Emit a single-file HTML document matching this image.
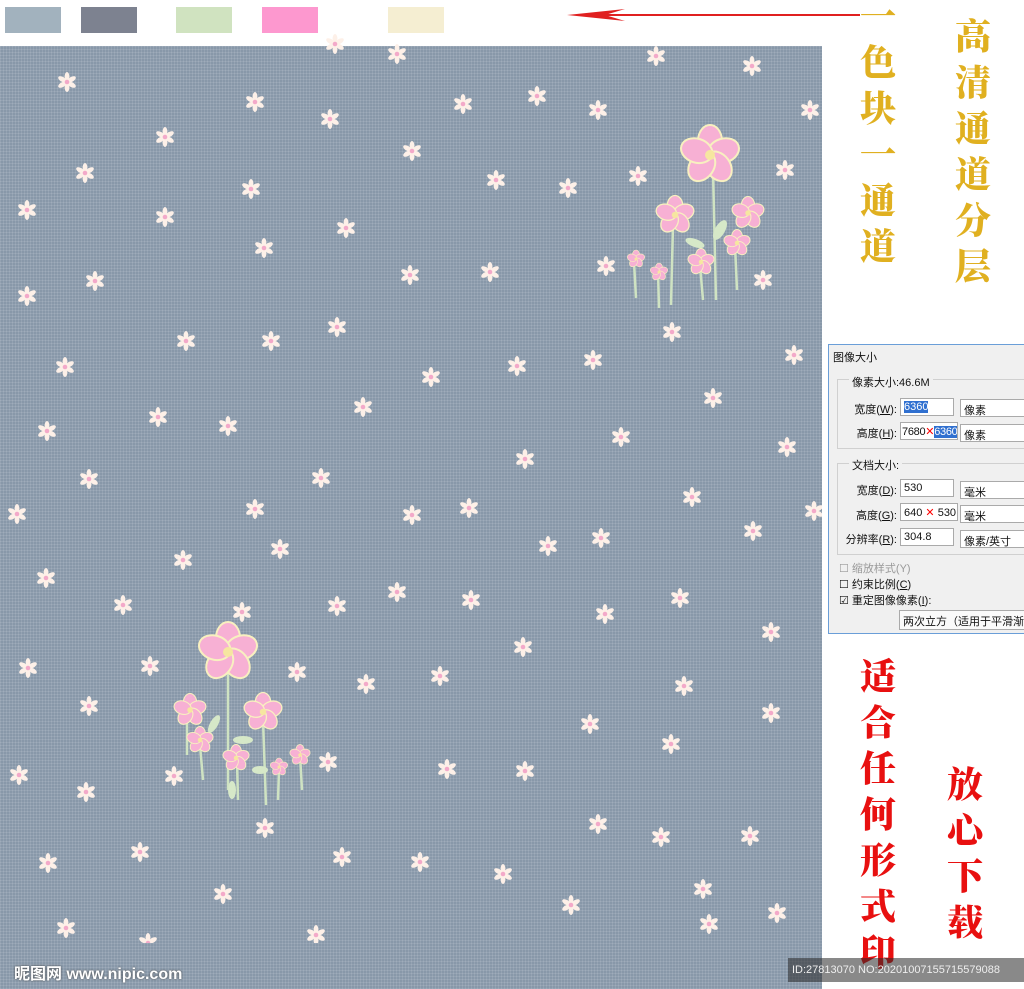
<!DOCTYPE html>
<html><head><meta charset="utf-8"><style>
*{margin:0;padding:0;box-sizing:border-box}
body{width:1024px;height:989px;background:#fff;position:relative;overflow:hidden;font-family:"Liberation Sans","Noto Sans CJK SC",sans-serif}
.sw{position:absolute;top:7px;height:26px;width:56px}
#pat{position:absolute;left:0;top:46px;width:822px;height:943px;background-color:#8898a9;
background-image:repeating-linear-gradient(90deg,rgba(255,255,255,.1) 0 1px,transparent 1px 3px),repeating-linear-gradient(0deg,rgba(255,255,255,.1) 0 1px,transparent 1px 3px)}
.col{position:absolute;font-family:"Noto Serif CJK SC",serif;font-weight:900;font-size:36px;line-height:46px;width:44px;text-align:center}
.y{color:#e0b020}.r{color:#e81010}
#dlg{position:absolute;left:828px;top:344px;width:200px;height:290px;background:#f0f0f0;border:1px solid #6a9ed8;font-size:11px;color:#111;white-space:nowrap;overflow:hidden}
#dlg .t{position:absolute;left:4px;top:4px}
.grp{position:absolute;left:8px;border:1px solid #d0d0d0}
.lb{position:absolute;text-align:right;width:60px}
.in{position:absolute;background:#fff;border:1px solid #aaa;height:18px;padding:2px 3px;overflow:hidden}
.sel{position:absolute;background:#fff;border:1px solid #aaa;height:18px;padding:2px 3px;width:70px}
</style></head><body>
<div class="sw" style="left:5px;background:#a2b2be"></div>
<div class="sw" style="left:81px;background:#7d8290"></div>
<div class="sw" style="left:176px;background:#d0e3c0"></div>
<div class="sw" style="left:262px;background:#fd98cf"></div>
<div class="sw" style="left:388px;background:#f5eed2"></div>
<svg style="position:absolute;left:565px;top:5px" width="300" height="20"><line x1="20" y1="10" x2="295" y2="10" stroke="#e02020" stroke-width="2"/><path d="M2 10 L60 4 L40 10 L60 16Z" fill="#e02020"/></svg>
<div id="pat"><svg id="s" width="822" height="943" style="position:absolute;left:0;top:-46px">
<defs><g id="f"><g fill="#fdf0e8"><ellipse cx="0" cy="-5.5" rx="2.4" ry="4.5"/><ellipse cx="0" cy="-5.5" rx="2.4" ry="4.5" transform="rotate(60)"/><ellipse cx="0" cy="-5.5" rx="2.4" ry="4.5" transform="rotate(120)"/><ellipse cx="0" cy="-5.5" rx="2.4" ry="4.5" transform="rotate(180)"/><ellipse cx="0" cy="-5.5" rx="2.4" ry="4.5" transform="rotate(240)"/><ellipse cx="0" cy="-5.5" rx="2.4" ry="4.5" transform="rotate(300)"/></g><circle r="2.3" fill="#f3a9c9"/></g>
<g id="p"><g fill="#f7b0d4" stroke="#f8f0c0" stroke-width="1"><ellipse cx="0" cy="-7" rx="6" ry="8"/><ellipse cx="0" cy="-7" rx="6" ry="8" transform="rotate(72)"/><ellipse cx="0" cy="-7" rx="6" ry="8" transform="rotate(144)"/><ellipse cx="0" cy="-7" rx="6" ry="8" transform="rotate(216)"/><ellipse cx="0" cy="-7" rx="6" ry="8" transform="rotate(288)"/></g><circle r="2.5" fill="#f6e6a0"/></g></defs>
<g id="g"></g>
<g stroke="#cfe3c2" stroke-width="2.5" fill="none"><path d="M713 170 L716 300"/><path d="M673 225 L671 305"/><path d="M700 265 L703 300"/><path d="M735 245 L737 290"/><path d="M634 262 L636 298"/><path d="M658 272 L659 308"/><path d="M228 665 L228 790"/><path d="M263 720 L266 805"/><path d="M187 715 L187 755"/><path d="M200 745 L203 780"/><path d="M237 760 L238 800"/><path d="M279 770 L278 800"/><path d="M300 755 L302 790"/></g>
<g fill="#d6e8c8"><ellipse cx="720" cy="230" rx="5" ry="11" transform="rotate(30 720 230)"/><ellipse cx="695" cy="243" rx="10" ry="4" transform="rotate(20 695 243)"/><ellipse cx="214" cy="724" rx="4" ry="10" transform="rotate(30 214 724)"/><ellipse cx="243" cy="740" rx="10" ry="4"/><ellipse cx="260" cy="770" rx="8" ry="4"/><ellipse cx="232" cy="790" rx="4" ry="9"/></g>
<use href="#p" transform="translate(710 155) scale(2)"/><use href="#p" transform="translate(675 215) scale(1.3)"/><use href="#p" transform="translate(748 213) scale(1.1)"/><use href="#p" transform="translate(737 243) scale(.9)"/><use href="#p" transform="translate(701 262) scale(.9)"/><use href="#p" transform="translate(636 259) scale(.6)"/><use href="#p" transform="translate(659 272) scale(.6)"/>
<use href="#p" transform="translate(228 652) scale(2)"/><use href="#p" transform="translate(190 710) scale(1.1)"/><use href="#p" transform="translate(263 712) scale(1.3)"/><use href="#p" transform="translate(200 740) scale(.9)"/><use href="#p" transform="translate(236 758) scale(.9)"/><use href="#p" transform="translate(279 767) scale(.6)"/><use href="#p" transform="translate(300 755) scale(.7)"/>
</svg></div>
<script>
var pts=[[67,82],[255,102],[330,119],[463,104],[537,96],[397,54],[656,56],[752,66],[598,110],[165,137],[412,151],[85,173],[251,189],[496,180],[568,188],[638,176],[785,170],[27,210],[165,217],[346,228],[264,248],[410,275],[490,272],[95,281],[27,296],[606,266],[763,280],[337,327],[186,341],[271,341],[672,332],[794,355],[65,367],[517,366],[593,360],[431,377],[363,407],[158,417],[228,426],[713,398],[47,431],[621,437],[787,447],[525,459],[89,479],[321,478],[469,508],[412,515],[255,509],[692,497],[17,514],[548,546],[601,538],[753,531],[280,549],[183,560],[46,578],[397,592],[123,605],[471,600],[337,606],[680,598],[242,612],[605,614],[771,632],[523,647],[28,668],[150,666],[297,672],[366,684],[440,676],[684,686],[89,706],[771,713],[590,724],[671,744],[19,775],[174,776],[447,769],[525,771],[328,762],[86,792],[265,828],[342,857],[420,862],[598,824],[661,837],[750,836],[48,863],[140,852],[503,874],[223,894],[571,905],[703,889],[709,924],[777,913],[66,928],[316,935],[148,943],[410,956],[491,964],[615,972],[814,511],[810,110],[335,44]];
var g=document.getElementById('g'),h='';pts.forEach(function(p){h+='<use href="#f" transform="translate('+p[0]+' '+p[1]+')"/>'});g.innerHTML=h;
</script>
<div class="col y" style="left:856px;top:-8px">一<br>色<br>块<br>一<br>通<br>道</div>
<div class="col y" style="left:951px;top:12px">高<br>清<br>通<br>道<br>分<br>层</div>
<div class="col r" style="left:856px;top:652px">适<br>合<br>任<br>何<br>形<br>式<br>印</div>
<div class="col r" style="left:943px;top:760px">放<br>心<br>下<br>载</div>
<div id="dlg"><div class="t">图像大小</div>
<div class="grp" style="top:34px;width:200px;height:70px"></div>
<div style="position:absolute;left:20px;top:29px;background:#f0f0f0;padding:0 3px">像素大小:46.6M</div>
<div class="lb" style="left:8px;top:56px">宽度(<u>W</u>):</div><div class="in" style="left:71px;top:53px;width:54px"><span style="background:#3070d0;color:#fff">6360</span></div><div class="sel" style="left:131px;top:54px">像素</div>
<div class="lb" style="left:8px;top:80px">高度(<u>H</u>):</div><div class="in" style="left:71px;top:77px;width:58px;padding:2px 1px;letter-spacing:-.3px">7680<span style="color:red">✕</span><span style="background:#3070d0;color:#fff">6360</span></div><div class="sel" style="left:131px;top:79px">像素</div>
<div class="grp" style="top:118px;width:200px;height:92px"></div>
<div style="position:absolute;left:20px;top:112px;background:#f0f0f0;padding:0 3px">文档大小:</div>
<div class="lb" style="left:8px;top:137px">宽度(<u>D</u>):</div><div class="in" style="left:71px;top:134px;width:54px">530</div><div class="sel" style="left:131px;top:136px">毫米</div>
<div class="lb" style="left:8px;top:162px">高度(<u>G</u>):</div><div class="in" style="left:71px;top:158px;width:58px">640 <span style="color:red">✕</span> 530</div><div class="sel" style="left:131px;top:160px">毫米</div>
<div class="lb" style="left:8px;top:186px">分辨率(<u>R</u>):</div><div class="in" style="left:71px;top:183px;width:54px">304.8</div><div class="sel" style="left:131px;top:185px">像素/英寸</div>
<div style="position:absolute;left:10px;top:215px;color:#999">☐ 缩放样式(Y)</div>
<div style="position:absolute;left:10px;top:231px">☐ 约束比例(<u>C</u>)</div>
<div style="position:absolute;left:10px;top:247px">☑ 重定图像像素(<u>I</u>):</div>
<div class="in" style="left:70px;top:265px;width:130px;height:20px;background:#fafafa">两次立方（适用于平滑渐变</div>
</div>
<div style="position:absolute;left:14px;top:960px;color:#fff;font-size:16px;font-weight:bold;text-shadow:0 0 2px #444">昵图网 www.nipic.com</div>
<div style="position:absolute;left:788px;top:958px;width:236px;height:24px;background:rgba(40,40,40,.55);color:#eee;font-size:11px;line-height:24px;padding-left:4px">ID:27813070 NO:20201007155715579088</div>
</body></html>
